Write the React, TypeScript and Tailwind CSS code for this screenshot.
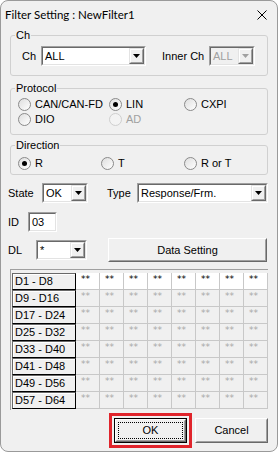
import React from "react";

const Sunken = ({ className, children, bg }: { className: string; children?: React.ReactNode; bg?: string }) => (
  <div className={`border border-t-[#a0a0a0] border-l-[#a0a0a0] border-r-white border-b-white ${className}`}>
    <div className={`h-full w-full border border-t-[#696969] border-l-[#696969] border-r-[#e3e3e3] border-b-[#e3e3e3] flex items-stretch ${bg ?? "bg-white"}`}>
      {children}
    </div>
  </div>
);

const Arrow = ({ disabled }: { disabled?: boolean }) => (
  <div className="w-[15px] shrink-0 border border-t-[#e3e3e3] border-l-[#e3e3e3] border-r-[#696969] border-b-[#696969] bg-[#f0f0f0]">
    <div className="h-full w-full border border-t-white border-l-white border-r-[#a0a0a0] border-b-[#a0a0a0] flex items-center justify-center">
      <svg width="7" height="4" viewBox="0 0 7 4">
        <path d="M0 0H7L3.5 4Z" fill={disabled ? "#a0a0a0" : "#000"} />
      </svg>
    </div>
  </div>
);

const Combo = ({ className, text, disabled }: { className: string; text: string; disabled?: boolean }) => (
  <Sunken className={className} bg={disabled ? "bg-[#f0f0f0]" : "bg-white"}>
    <span className={`flex-1 pl-[2px] leading-[16px] whitespace-nowrap ${disabled ? "text-[#a0a0a0]" : "text-black"}`}>{text}</span>
    <Arrow disabled={disabled} />
  </Sunken>
);

const Radio = ({ checked, disabled }: { checked?: boolean; disabled?: boolean }) => (
  <span
    className={`w-[13px] h-[13px] shrink-0 rounded-full border flex items-center justify-center ${
      disabled ? "border-[#cfcfcf] bg-[#f3f3f3]" : "border-[#8a8a8a] bg-gradient-to-br from-[#dedede] to-white"
    }`}
  >
    {checked && <span className="w-[5px] h-[5px] rounded-full bg-black" />}
  </span>
);

const RadioItem = ({ label, checked, disabled, className }: { label: string; checked?: boolean; disabled?: boolean; className: string }) => (
  <div className={`flex items-center gap-[4px] whitespace-nowrap ${className}`}>
    <Radio checked={checked} disabled={disabled} />
    <span className={disabled ? "text-[#a0a0a0]" : "text-black"}>{label}</span>
  </div>
);

const RaisedButton = ({ className, children, def }: { className: string; children: React.ReactNode; def?: boolean }) => (
  <div className={`${def ? "border border-black" : ""} ${className}`}>
    <div className="h-full w-full border border-t-white border-l-white border-r-[#696969] border-b-[#696969] bg-[#f0f0f0]">
      <div className="h-full w-full border border-t-[#f0f0f0] border-l-[#f0f0f0] border-r-[#a0a0a0] border-b-[#a0a0a0] flex items-center justify-center p-[1px]">
        {def ? (
          <div className="h-full w-full border border-dotted border-black flex items-center justify-center">{children}</div>
        ) : (
          children
        )}
      </div>
    </div>
  </div>
);

const rows = ["D1 - D8", "D9 - D16", "D17 - D24", "D25 - D32", "D33 - D40", "D41 - D48", "D49 - D56", "D57 - D64"];

export default function App() {
  return (
    <div className="w-[278px] h-[452px] bg-white">
      <div className="w-full h-full bg-[#f0f0f0] border border-[#9a9a9a] rounded-[8px] overflow-hidden flex flex-col text-[11px] text-black font-['Liberation_Sans',Arial,sans-serif]">
        {/* title */}
        <div className="h-[27px] shrink-0 flex items-center justify-between pl-[4px] pr-[10px]">
          <span className="leading-[16px] text-[11.5px] font-['Lato',sans-serif]">Filter Setting : NewFilter1</span>
          <svg width="10" height="10" viewBox="0 0 10 10">
            <path d="M0.5 0.5L9.5 9.5M9.5 0.5L0.5 9.5" stroke="#000" strokeWidth="1" />
          </svg>
        </div>

        {/* Ch */}
        <fieldset className="mx-[9px] border border-[#d0d0d0] rounded-[3px] pb-[9px]">
          <legend className="ml-[4px] px-[1px] leading-[14px]">Ch</legend>
          <div className="mt-[4px] h-[20px] flex items-center pl-[11px] whitespace-nowrap">
            <span className="w-[19px]">Ch</span>
            <Combo className="w-[105px] h-[20px]" text="ALL" />
            <span className="ml-[16px] w-[47px]">Inner Ch</span>
            <Combo className="w-[46px] h-[20px]" text="ALL" disabled />
          </div>
        </fieldset>

        {/* Protocol */}
        <fieldset className="mt-[5px] mx-[9px] border border-[#d0d0d0] rounded-[3px] pb-[7px]">
          <legend className="ml-[4px] px-[1px] leading-[14px]">Protocol</legend>
          <div className="mt-[2px] pl-[7px]">
            <div className="h-[15px] flex items-center">
              <RadioItem className="w-[91px]" label="CAN/CAN-FD" />
              <RadioItem className="w-[75px]" label="LIN" checked />
              <RadioItem className="w-[70px]" label="CXPI" />
            </div>
            <div className="h-[15px] flex items-center">
              <RadioItem className="w-[91px]" label="DIO" />
              <RadioItem className="w-[75px]" label="AD" disabled />
            </div>
          </div>
        </fieldset>

        {/* Direction */}
        <fieldset className="mt-[3px] mx-[9px] border border-[#d0d0d0] rounded-[3px] pb-[3px]">
          <legend className="ml-[4px] px-[1px] leading-[14px]">Direction</legend>
          <div className="mt-[4px] pl-[7px] h-[15px] flex items-center">
            <RadioItem className="w-[83px]" label="R" checked />
            <RadioItem className="w-[83px]" label="T" />
            <RadioItem className="w-[70px]" label="R or T" />
          </div>
        </fieldset>

        {/* State / Type */}
        <div className="mt-[8px] h-[20px] flex items-center pl-[7px] whitespace-nowrap">
          <span className="w-[34px]">State</span>
          <Combo className="w-[46px] h-[20px]" text="OK" />
          <span className="ml-[19px] w-[30px]">Type</span>
          <Combo className="w-[131px] h-[20px]" text="Response/Frm." />
        </div>

        {/* ID */}
        <div className="mt-[9px] h-[20px] flex items-center pl-[7px]">
          <span className="w-[20px]">ID</span>
          <Sunken className="w-[29px] h-[20px]">
            <span className="pl-[2px] leading-[16px]">03</span>
          </Sunken>
        </div>

        {/* DL */}
        <div className="mt-[6px] h-[24px] flex items-center pl-[7px]">
          <span className="w-[28px]">DL</span>
          <Combo className="w-[51px] h-[20px]" text="*" />
          <RaisedButton className="ml-[21px] w-[159px] h-[24px]">Data Setting</RaisedButton>
        </div>

        {/* grid */}
        <div className="mt-[7px] mx-[9px] border-t border-l border-[#a0a0a0] pt-[3px] pl-[1px] pb-[1px]">
          {rows.map((r, i) => (
            <div key={r} className="flex h-[17px]">
              <div className="w-[64px] h-full border border-t-[#696969] border-l-[#696969] border-r-black border-b-black bg-[#f0f0f0] shadow-[inset_1px_1px_0_#fff] pl-[2px] leading-[15px] whitespace-nowrap">
                {r}
              </div>
              {Array.from({ length: 8 }).map((_, j) => (
                <div
                  key={j}
                  className={`w-[24px] h-full border-r border-b border-[#c8c8c8] pl-[5px] pt-[1px] text-[9px] leading-[10px] font-['DejaVu_Sans',sans-serif] ${
                    i === 0 ? "bg-white text-black" : "bg-[#f0f0f0] text-[#a8a8a8]"
                  }`}
                >
                  **
                </div>
              ))}
            </div>
          ))}
        </div>

        {/* buttons */}
        <div className="mt-[8px] flex justify-end gap-[8px] pr-[9px]">
          <div className="relative">
            <span className="absolute -left-[5px] -top-[5px] -right-[5px] -bottom-[5px] border-[3px] border-[#e0242b]" />
            <RaisedButton className="w-[73px] h-[25px]" def>
              OK
            </RaisedButton>
          </div>
          <RaisedButton className="w-[73px] h-[25px]">Cancel</RaisedButton>
        </div>
      </div>
    </div>
  );
}
